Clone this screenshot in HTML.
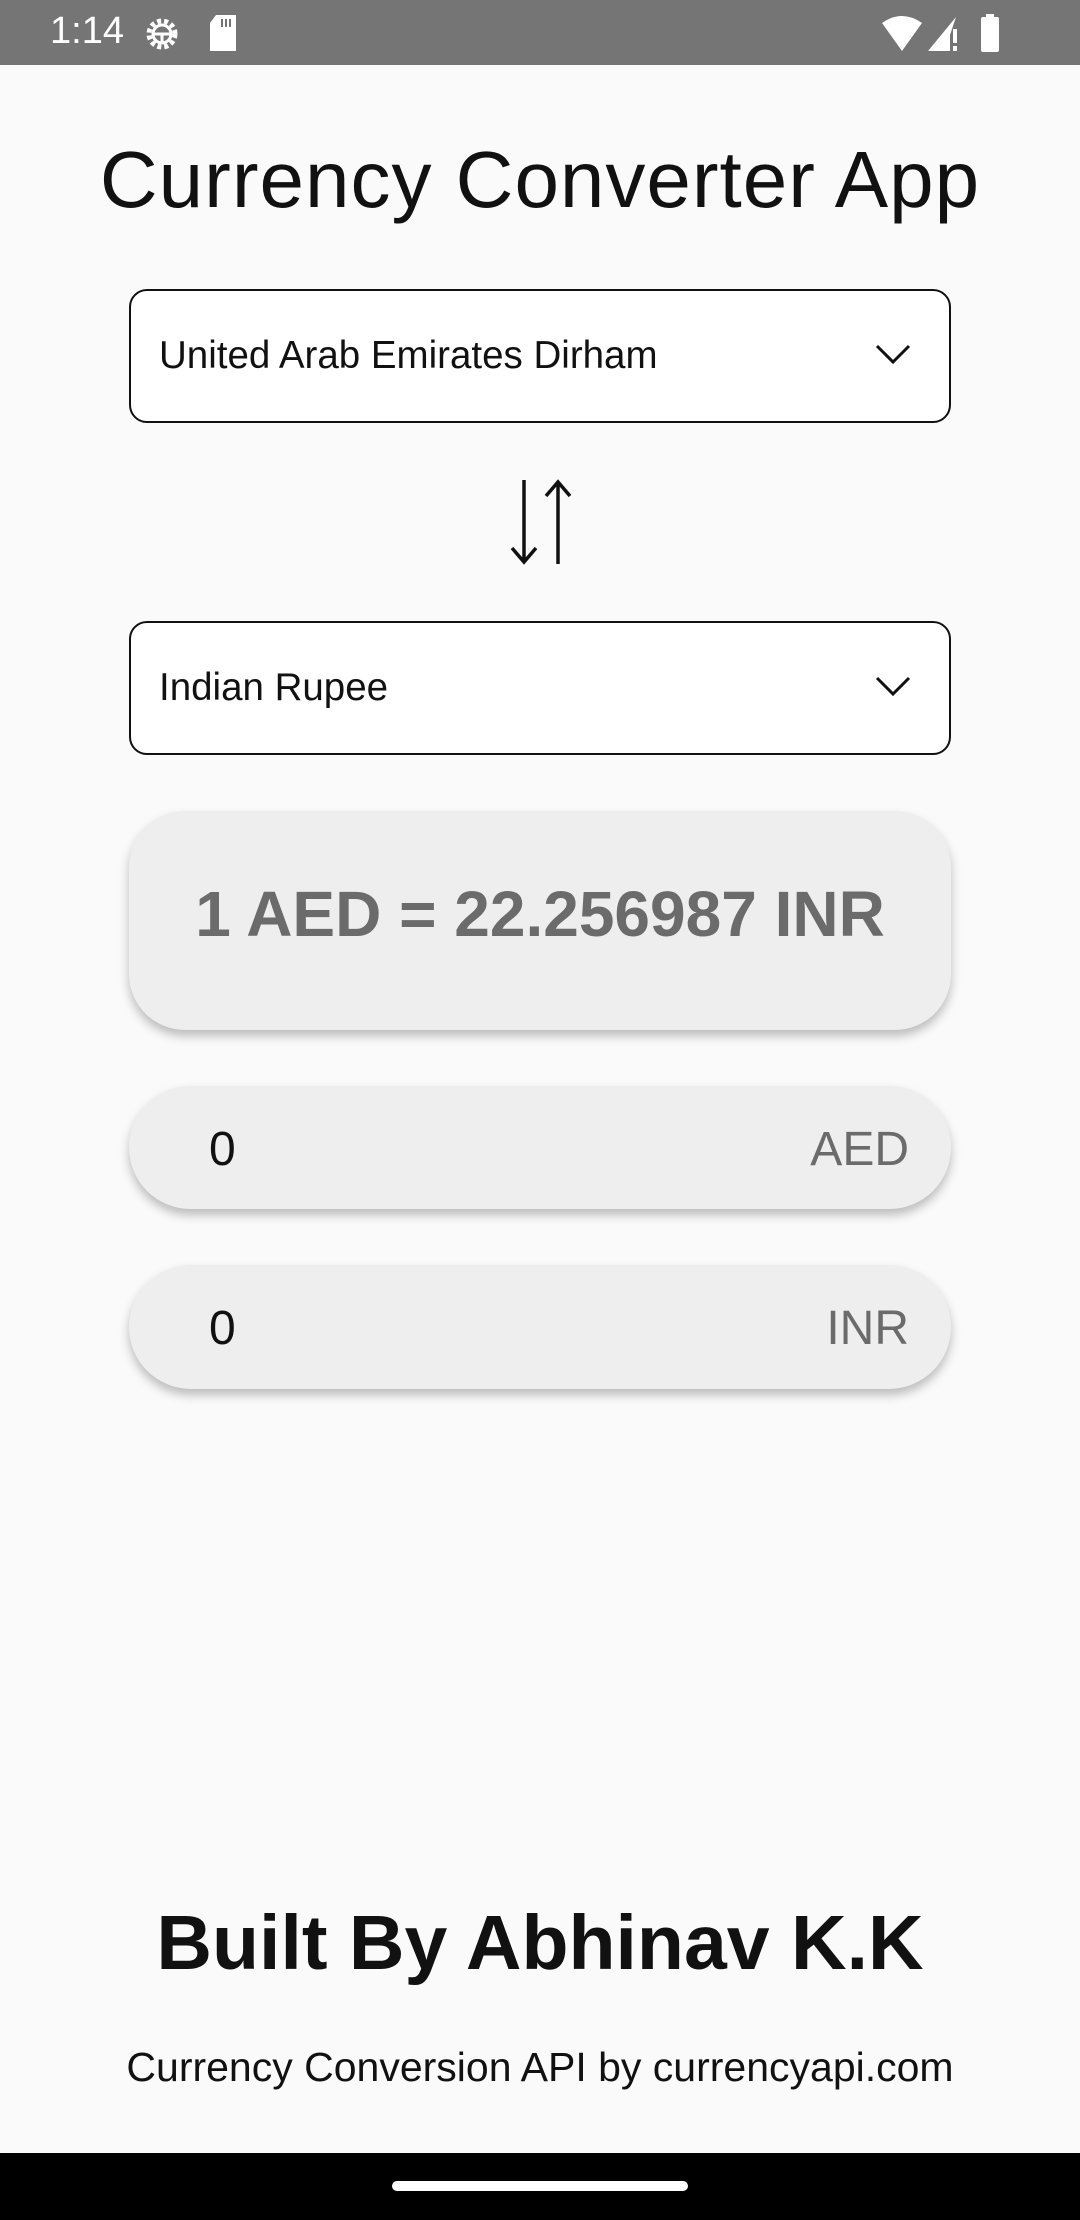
<!DOCTYPE html>
<html><head><meta charset="utf-8"><style>
*{margin:0;padding:0;box-sizing:border-box}
body{width:1080px;height:2220px;background:#fafafa;font-family:"Liberation Sans",sans-serif;position:relative;overflow:hidden}
.sb{position:absolute;top:0;left:0;width:1080px;height:65px;background:#757575;color:#fff}
.abs{position:absolute}
.dd{position:absolute;left:129px;width:822px;height:134px;border:2.5px solid #111;border-radius:18px;background:#fff}
.dd span{position:absolute;left:28px;top:50%;transform:translateY(-50%);font-size:38.5px;color:#111}
.dd svg{position:absolute;right:38px;top:50%;margin-top:-12px}
.card{position:absolute;left:129px;width:822px;background:#eeeeee;box-shadow:0 6px 10px rgba(0,0,0,.25)}
</style></head><body>
<div class="sb">
<div class="abs" style="left:50px;top:10px;font-size:38px">1:14</div>
<svg class="abs" style="left:142px;top:14px" width="40" height="40" viewBox="0 0 40 40"><circle cx="20" cy="20" r="13" fill="none" stroke="#fff" stroke-width="5" stroke-dasharray="4 3"/><circle cx="20" cy="20" r="9" fill="none" stroke="#fff" stroke-width="3"/><path d="M11 20h18M20 20v10" stroke="#fff" stroke-width="3"/></svg>
<svg class="abs" style="left:208px;top:15px" width="30" height="36" viewBox="0 0 30 36"><path d="M8 0h20v36H2V8z" fill="#fff"/><path d="M14 4v8M18 4v8M22 4v8" stroke="#757575" stroke-width="2"/></svg>
<svg class="abs" style="left:882px;top:15px" width="40" height="38" viewBox="0 0 40 38"><path d="M0 8Q20-6 40 8L20 36z" fill="#fff"/></svg>
<svg class="abs" style="left:928px;top:15px" width="34" height="38" viewBox="0 0 34 38"><path d="M28 2L0 36h22V20z" fill="#fff"/><rect x="25" y="14" width="4" height="14" fill="#fff"/><rect x="25" y="31" width="4" height="5" fill="#fff"/></svg>
<svg class="abs" style="left:980px;top:14px" width="20" height="40" viewBox="0 0 20 40"><rect x="6" y="0" width="8" height="4" fill="#fff"/><rect x="1" y="3" width="18" height="35" rx="2" fill="#fff"/></svg>
</div>
<div class="abs" style="left:0;width:1080px;top:134px;text-align:center;font-size:80px;letter-spacing:1px;color:#111">Currency Converter App</div>
<div class="dd" style="top:289px"><span>United Arab Emirates Dirham</span><svg width="36" height="22" viewBox="0 0 36 22"><path d="M2 2l16 16 16-16" fill="none" stroke="#111" stroke-width="3"/></svg></div>
<svg class="abs" style="left:508px;top:478px" width="66" height="88" viewBox="0 0 66 88"><path d="M16 2v82M4 70l12 14 12-14M50 86V4M38 18L50 4l12 14" fill="none" stroke="#111" stroke-width="3.5"/></svg>
<div class="dd" style="top:621px"><span>Indian Rupee</span><svg width="36" height="22" viewBox="0 0 36 22"><path d="M2 2l16 16 16-16" fill="none" stroke="#111" stroke-width="3"/></svg></div>
<div class="card" style="top:811px;height:219px;border-radius:56px;text-align:center;line-height:207px;font-size:64px;font-weight:bold;color:#6b6b6b">1 AED = 22.256987 INR</div>
<div class="card" style="top:1086px;height:123px;border-radius:62px"><span class="abs" style="left:80px;top:36px;font-size:48px;color:#111">0</span><span class="abs" style="right:42px;top:36px;font-size:48px;color:#6b6b6b">AED</span></div>
<div class="card" style="top:1265px;height:124px;border-radius:62px"><span class="abs" style="left:80px;top:36px;font-size:48px;color:#111">0</span><span class="abs" style="right:42px;top:36px;font-size:48px;color:#6b6b6b">INR</span></div>
<div class="abs" style="left:0;width:1080px;top:1899px;text-align:center;font-size:77px;font-weight:bold;color:#111">Built By Abhinav K.K</div>
<div class="abs" style="left:0;width:1080px;top:2044px;text-align:center;font-size:41px;color:#111">Currency Conversion API by currencyapi.com</div>
<div class="abs" style="left:0;top:2153px;width:1080px;height:67px;background:#000"><div class="abs" style="left:392px;top:28px;width:296px;height:10px;border-radius:5px;background:#fff"></div></div>
</body></html>
